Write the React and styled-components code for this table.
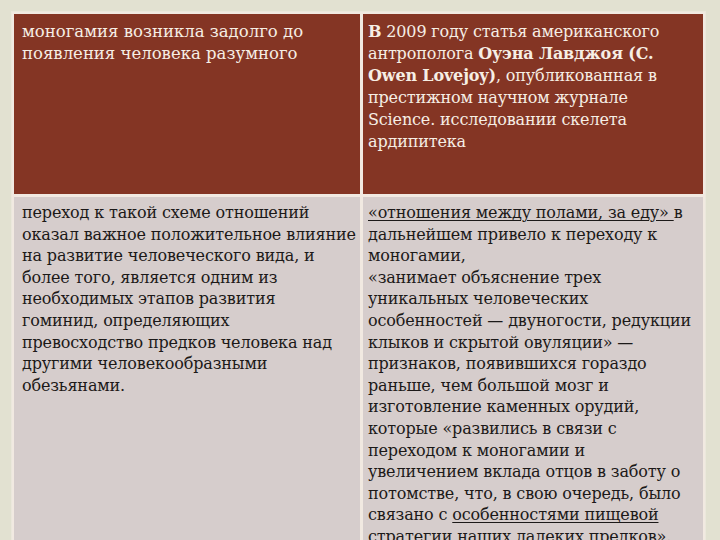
import React from "react";
import styled, { createGlobalStyle } from "styled-components";

const GlobalStyle = createGlobalStyle`
  html, body {
    margin: 0;
    padding: 0;
    background: #e2e1d1;
  }
  body {
    font-family: "DejaVu Serif", "Liberation Serif", serif;
    overflow: hidden;
  }
`;

function App() {
  return (
    <>
      <GlobalStyle />
      <Page>
        <Table>
          <HeadCell $wide>
            моногамия возникла задолго до
            <br />
            появления человека разумного
          </HeadCell>
          <HeadCell $right>
            <b>В</b> 2009 году статья американского
            <br />
            антрополога <b>Оуэна Лавджоя (C.</b>
            <br />
            <b>Owen Lovejoy)</b>, опубликованная в
            <br />
            престижном научном журнале
            <br />
            Science. исследовании скелета
            <br />
            ардипитека
          </HeadCell>
          <BodyCell>
            переход к такой схеме отношений
            <br />
            оказал важное положительное влияние
            <br />
            на развитие человеческого вида, и
            <br />
            более того, является одним из
            <br />
            необходимых этапов развития
            <br />
            гоминид, определяющих
            <br />
            превосходство предков человека над
            <br />
            другими человекообразными
            <br />
            обезьянами.
          </BodyCell>
          <BodyCell $right>
            <u>«отношения между полами, за еду» </u>в
            <br />
            дальнейшем привело к переходу к
            <br />
            моногамии,
            <br />
            «занимает объяснение трех
            <br />
            уникальных человеческих
            <br />
            особенностей — двуногости, редукции
            <br />
            клыков и скрытой овуляции» —
            <br />
            признаков, появившихся гораздо
            <br />
            раньше, чем большой мозг и
            <br />
            изготовление каменных орудий,
            <br />
            которые «развились в связи с
            <br />
            переходом к моногамии и
            <br />
            увеличением вклада отцов в заботу о
            <br />
            потомстве, что, в свою очередь, было
            <br />
            связано с <u>особенностями пищевой</u>
            <br />
            стратегии наших далеких предков».
          </BodyCell>
        </Table>
      </Page>
    </>
  );
}

const Page = styled.div`
  padding: 12px 0 0 12px;
  height: 540px;
  box-sizing: border-box;
`;

const Table = styled.div`
  display: grid;
  grid-template-columns: 346px 340px;
  grid-template-rows: 180px 400px;
  gap: 3px;
  width: fit-content;
  padding: 2px;
  background: #f1e9e1;
  box-shadow: 0 0 0 1px #ebe8dc;
`;

const Cell = styled.div`
  padding: 7px 4px 0 ${(p) => (p.$right ? "5px" : "8px")};
  font-size: 16px;
  line-height: 21.6px;
  white-space: nowrap;
  overflow: hidden;
  letter-spacing: -0.15px;

  b {
    font-weight: bold;
  }
  u {
    text-underline-offset: 2px;
  }
`;

const HeadCell = styled(Cell)`
  background: #843524;
  color: #f6eee4;
  line-height: 22px;
  font-size: ${(p) => (p.$wide ? "16.5px" : "16px")};
  letter-spacing: ${(p) => (p.$wide ? "0px" : "-0.15px")};
`;

const BodyCell = styled(Cell)`
  background: #d6cdcc;
  color: #1c1918;
  padding-top: 5px;
`;

export default App;
